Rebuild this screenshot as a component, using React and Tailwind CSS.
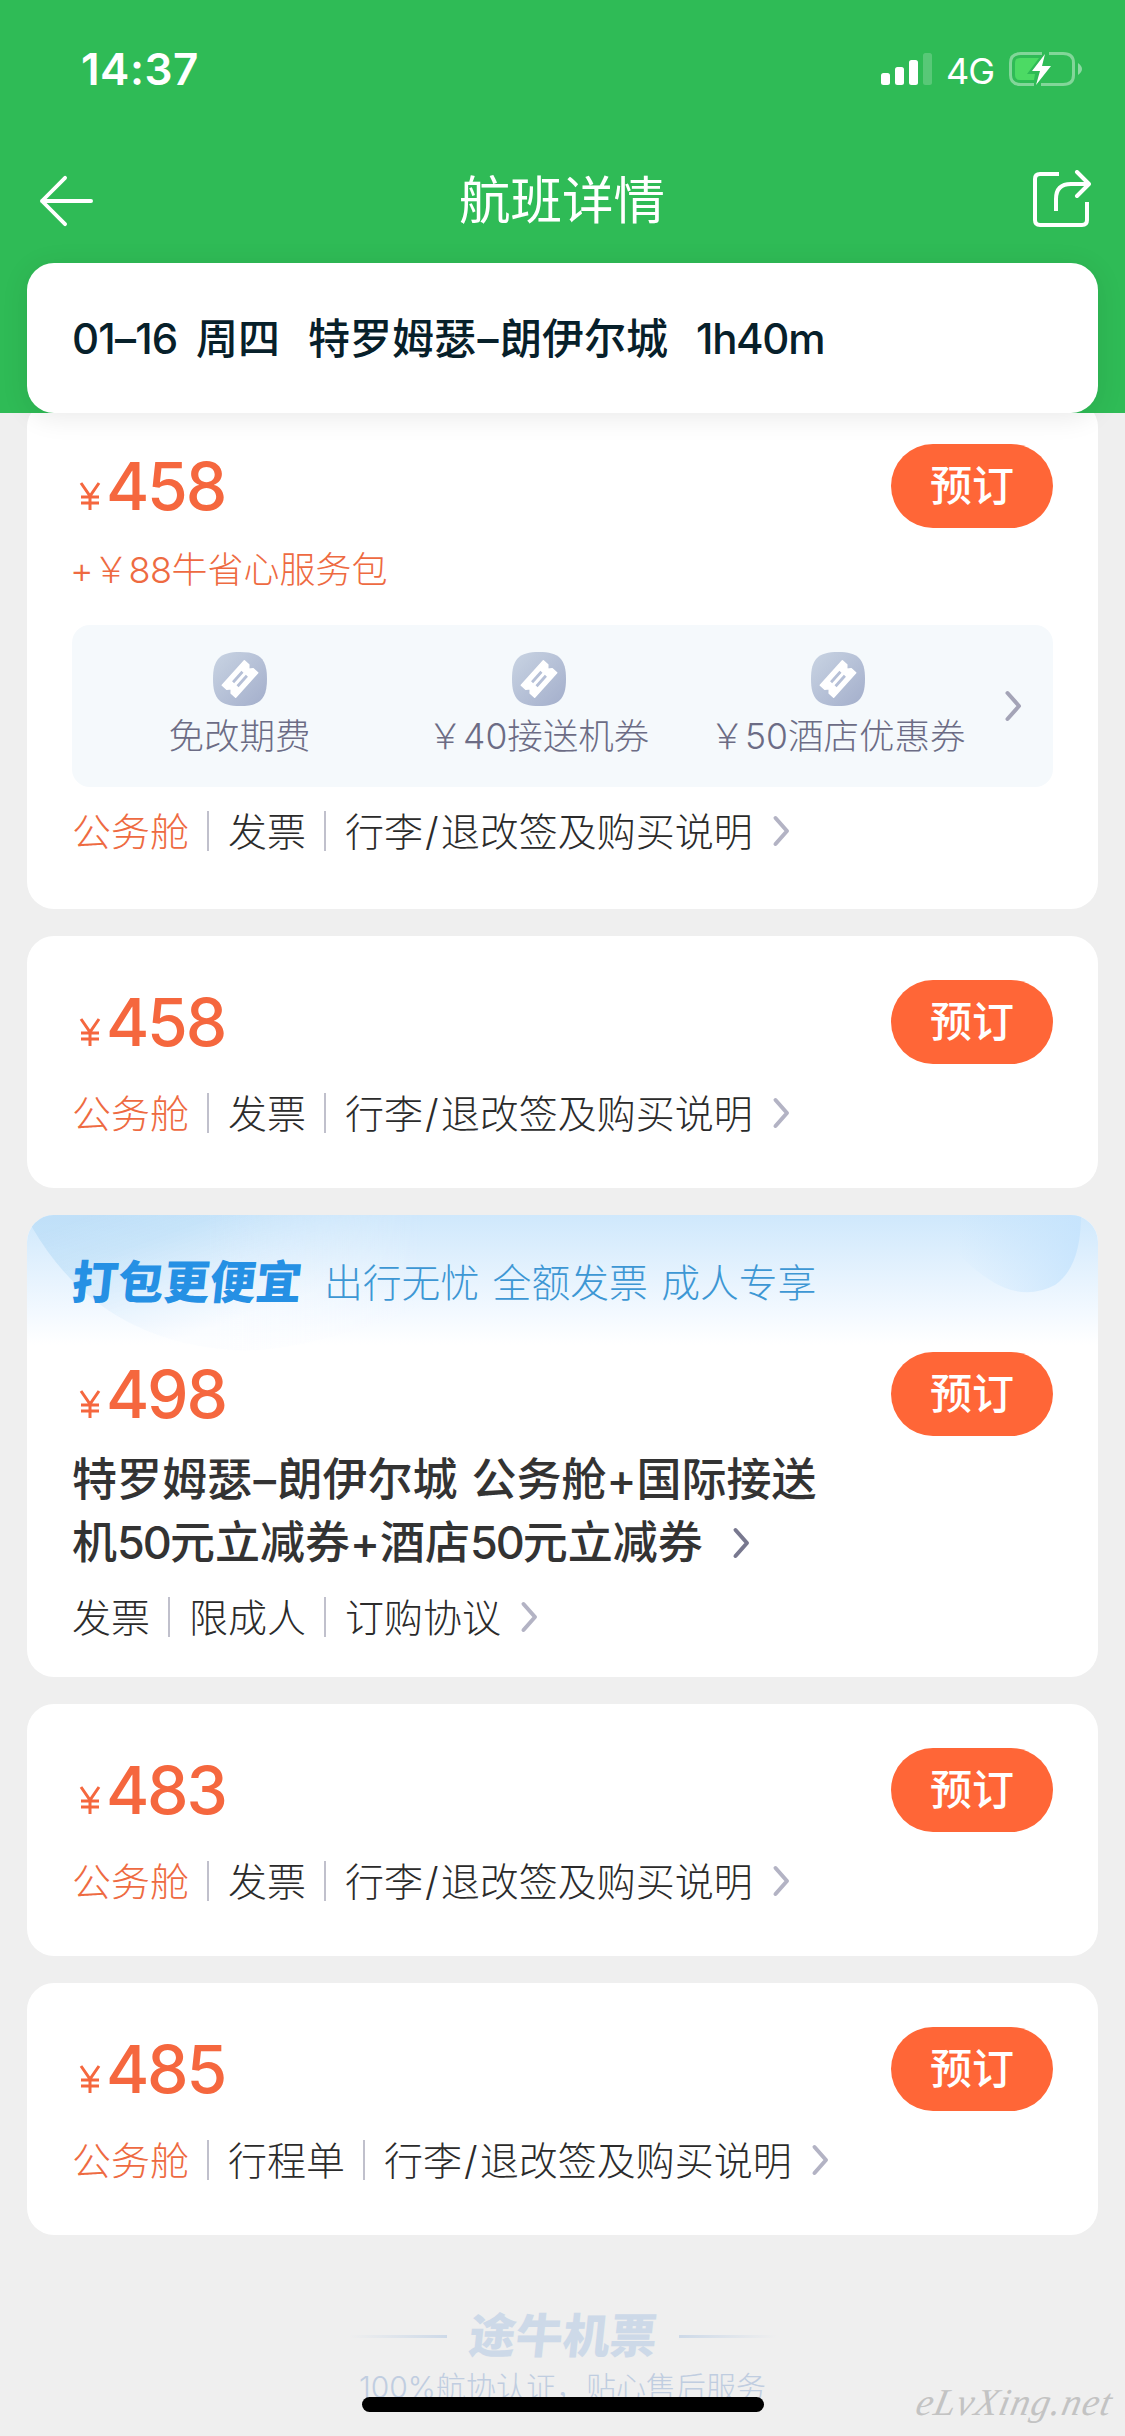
import React from "react";

const tickets = [
  { price: "483", tags: ["发票"] },
  { price: "485", tags: ["行程单"] },
];

const perks = ["免改期费", "￥40接送机券", "￥50酒店优惠券"];

function Chevron({ className }) {
  return (
    <svg viewBox="0 0 18 32" className={className} fill="none" stroke="currentColor" strokeWidth="4" strokeLinecap="round" strokeLinejoin="round">
      <path d="M3.5 3 L15 16 L3.5 29" />
    </svg>
  );
}

function StatusBar() {
  return (
    <div className="flex h-[138px] items-center justify-between pl-[81px] pr-[42px] text-white">
      <span className="text-[44px] font-semibold leading-none tracking-[0.5px]">14:37</span>
      <div className="flex items-center">
        <svg viewBox="0 0 52 33" className="h-[33px] w-[52px]" fill="currentColor">
          <rect x="0" y="20" width="9" height="12" rx="2.5" />
          <rect x="14" y="14" width="9" height="18" rx="2.5" />
          <rect x="28" y="7" width="9" height="25" rx="2.5" />
          <rect x="42" y="0" width="9" height="32" rx="2.5" opacity="0.2" />
        </svg>
        <span className="ml-[13px] mt-[3px] w-[50px] text-[36px] leading-none tracking-[-1px]">4G</span>
        <svg viewBox="0 0 74 36" className="ml-[13px] h-[36px] w-[74px]" fill="none">
          <path d="M33 2.5H12Q1.5 2.5 1.5 12V24Q1.5 33.5 12 33.5H25" stroke="#fff" strokeOpacity="0.4" strokeWidth="3" />
          <path d="M40 2.5H54Q64.5 2.5 64.5 12V24Q64.5 33.5 54 33.5H32" stroke="#fff" strokeOpacity="0.4" strokeWidth="3" />
          <path d="M69 12Q77 18 69 24Z" fill="#fff" fillOpacity="0.45" />
          <path d="M11 7H30L18 23H26L25 29H11Q6 29 6 24V12Q6 7 11 7Z" fill="#4cda64" />
          <path d="M36 3L23 20H31L27 34L42 15H33Z" fill="#fff" />
        </svg>
      </div>
    </div>
  );
}

function NavBar() {
  return (
    <div className="flex h-[125px] items-center justify-between pl-[38px] pr-[34px] text-white">
      <svg viewBox="0 0 56 54" className="h-[52px] w-[58px]" fill="none" stroke="currentColor" strokeWidth="4" strokeLinecap="round" strokeLinejoin="round">
        <path d="M26 3L2 27L26 51M2 27H53" />
      </svg>
      <h1 className="mr-[5px] text-[51.5px] font-normal leading-none">航班详情</h1>
      <svg viewBox="0 0 58 58" className="-mt-[4px] h-[58px] w-[58px]" fill="none" stroke="currentColor" strokeWidth="4" strokeLinejoin="round">
        <path d="M26 4H7Q2 4 2 9V50Q2 55 7 55H49Q54 55 54 50V32" />
        <path d="M23 41V29Q23 14 38 14H56" />
        <path d="M44 2L56 14L44 26" strokeLinecap="round" />
      </svg>
    </div>
  );
}

function PriceRow({ price }) {
  return (
    <div className="flex h-[84px] items-center justify-between">
      <div className="flex items-baseline pl-[7px] text-[#f5673e]">
        <svg viewBox="0 0 22 28" className="mr-[5px] h-[28px] w-[22px]" fill="none" stroke="currentColor" strokeWidth="3">
          <path d="M2 1L11 14L20 1M11 14V28M2 15H20M2 21H20" />
        </svg>
        <span className="text-[66px] font-medium leading-[82px] tracking-[-2.2px]">{price}</span>
      </div>
      <button className="h-[84px] w-[162px] rounded-full bg-[#ff6637] pb-[1px] text-[42px] font-medium leading-none text-white">预订</button>
    </div>
  );
}

function TagRow({ cabin, tags, link }) {
  const items = [...tags, link];
  return (
    <div className="flex h-[48px] items-center text-[39px] font-light leading-none text-[#2b2b2b]">
      {cabin && <span className="text-[#ee6a41]">{cabin}</span>}
      {items.map((item, i) => (
        <React.Fragment key={item}>
          {(cabin || i > 0) && <span className="ml-[18px] mr-[19px] h-[40px] w-[2px] bg-[#c0c0cc]" />}
          <span className="whitespace-nowrap">
            {item.split("/").map((part, n) => (
              <React.Fragment key={part}>
                {n > 0 && <span className="px-[2px]">/</span>}
                {part}
              </React.Fragment>
            ))}
          </span>
        </React.Fragment>
      ))}
      <Chevron className="ml-[19px] h-[32px] w-[18px] text-[#b3b3c4]" />
    </div>
  );
}

function TicketIcon() {
  return (
    <svg viewBox="0 0 54 54" className="h-[54px] w-[54px]">
      <defs>
        <linearGradient id="badge" x1="0" y1="0" x2="1" y2="1">
          <stop offset="0" stopColor="#c9d4e3" />
          <stop offset="1" stopColor="#a3aecb" />
        </linearGradient>
      </defs>
      <path d="M27 0C47 0 54 7 54 27S47 54 27 54S0 47 0 27S7 0 27 0Z" fill="url(#badge)" />
      <g transform="rotate(-48 27 27)">
        <path d="M10.5 18H43.5V24L40 27L43.5 30V36H10.5V30L14 27L10.5 24Z" fill="#fff" stroke="#fff" strokeWidth="1.5" strokeLinejoin="round" />
        <path d="M20 24H34M20 30H34" stroke="#b6c0d7" strokeWidth="2.8" />
      </g>
    </svg>
  );
}

function ServicePackage() {
  return (
    <>
      <p className="mt-[20px] flex h-[44px] items-center whitespace-nowrap text-[36px] font-light leading-none text-[#ee6a41]">
        <span className="-ml-[2px] tracking-[-0.5px]">+￥88</span>牛省心服务包
      </p>
      <div className="relative mt-[33px] flex h-[162px] rounded-[18px] bg-[#f5f9fc] pl-[18px] pr-[63px]">
        {perks.map((perk) => (
          <div key={perk} className="flex w-[299px] shrink-0 flex-col items-center pt-[27px]">
            <TicketIcon />
            <span className="mt-[11px] whitespace-nowrap text-[35.5px] font-light leading-[40px] text-[#6c6c85]">{perk}</span>
          </div>
        ))}
        <Chevron className="absolute right-[31px] top-[65px] h-[32px] w-[18px] text-[#a4a4b7]" />
      </div>
    </>
  );
}

function Card({ price, tags }) {
  return (
    <section className="h-[252px] rounded-[27px] bg-white px-[45px] pt-[44px]">
      <PriceRow price={price} />
      <div className="mt-[25px]">
        <TagRow cabin="公务舱" tags={tags} link="行李/退改签及购买说明" />
      </div>
    </section>
  );
}

function BundleCard() {
  return (
    <section className="relative h-[462px] overflow-hidden rounded-[27px] bg-white px-[45px]">
      <svg viewBox="0 0 1071 140" className="absolute left-0 top-0 h-[140px] w-full" preserveAspectRatio="none">
        <defs>
          <linearGradient id="sky" x1="0" y1="0" x2="0" y2="1">
            <stop offset="0" stopColor="#cfe8fc" />
            <stop offset="0.75" stopColor="#f3f9ff" />
            <stop offset="1" stopColor="#ffffff" />
          </linearGradient>
          <linearGradient id="arc" gradientUnits="userSpaceOnUse" x1="60" y1="0" x2="110" y2="140">
            <stop offset="0" stopColor="#b9dcf6" stopOpacity="0.7" />
            <stop offset="0.3" stopColor="#bfe0f8" stopOpacity="0.65" />
            <stop offset="0.7" stopColor="#e3f1fd" stopOpacity="0.6" />
            <stop offset="1" stopColor="#fafcff" stopOpacity="0.6" />
          </linearGradient>
          <linearGradient id="arcFade" x1="0" y1="0" x2="1" y2="0">
            <stop offset="0.45" stopColor="#fff" />
            <stop offset="1" stopColor="#000" />
          </linearGradient>
          <mask id="arcMask">
            <rect width="400" height="140" fill="url(#arcFade)" />
          </mask>
          <linearGradient id="drop" x1="0.2" y1="0.5" x2="1" y2="0.5">
            <stop offset="0" stopColor="#c4e3fd" stopOpacity="0" />
            <stop offset="1" stopColor="#c4e3fd" stopOpacity="0.8" />
          </linearGradient>
        </defs>
        <rect width="1071" height="130" fill="url(#sky)" />
        <path d="M0 0H400V90Q270 140 205 135Q70 125 5 12L0 0Z" fill="url(#arc)" mask="url(#arcMask)" />
        <path d="M900 0H1054Q1054 52 1028 70Q998 86 966 67Q930 45 900 0Z" fill="url(#drop)" />
      </svg>
      <div className="relative">
        <div className="flex h-[137px] items-center whitespace-nowrap leading-none">
          <span className="-mt-[4px] -skew-x-6 text-[46px] font-black text-[#2590e4]">打包更便宜</span>
          <span className="ml-[22px] text-[38.8px] font-light text-[#3d97d4] [word-spacing:2.5px]">出行无忧 全额发票 成人专享</span>
        </div>
        <PriceRow price="498" />
        <h2 className="mt-[12px] text-[45px] font-medium leading-[63px] text-[#333333]">
          特罗姆瑟<span className="px-[1.5px]">–</span>朗伊尔城 <span className="ml-[2px]">公务舱+国际接送</span>
          <br />
          <span className="flex items-center">
            机<span className="tracking-[-2px]">50</span>元立减券+酒店<span className="tracking-[-2px]">50</span>元立减券
            <Chevron className="ml-[29px] h-[32px] w-[18px] text-[#78788f]" />
          </span>
        </h2>
        <div className="mt-[19px]">
          <TagRow tags={["发票", "限成人"]} link="订购协议" />
        </div>
      </div>
    </section>
  );
}

function Footer() {
  return (
    <footer className="relative h-[201px] overflow-hidden pt-[76px]">
      <div className="flex items-center justify-center text-[#cdd9e8]">
        <span className="h-[3px] w-[98px] bg-linear-to-r from-transparent to-[#cdd9e8]" />
        <span className="mx-[22px] -skew-x-6 text-[47px] font-black leading-[50px]">途牛机票</span>
        <span className="h-[3px] w-[98px] bg-linear-to-l from-transparent to-[#cdd9e8]" />
      </div>
      <p className="mt-[6px] text-center text-[30px] font-light leading-[40px] text-[#c0cde0]">100%航协认证，贴心售后服务</p>
      <div className="absolute left-[362px] top-[162px] h-[15px] w-[402px] rounded-full bg-black" />
      <span className="absolute right-[12px] top-[145px] -skew-x-12 font-['Liberation_Serif',serif] text-[38px] font-medium italic leading-[44px] tracking-[1.2px] text-[#c3c3c3]">eLvXing.net</span>
    </footer>
  );
}

export default function App() {
  return (
    <div className="h-[2436px] w-[1125px] overflow-hidden bg-[#efefef] font-['Inter','Noto_Sans_CJK_SC',sans-serif]">
      <header className="relative z-10 h-[413px] bg-[#2fbb56]">
        <StatusBar />
        <NavBar />
        <div className="mx-[27px] flex h-[150px] items-center whitespace-pre rounded-[27px] bg-white pl-[45px] pt-[2px] text-[42px] font-medium leading-none text-[#07202a] shadow-[0_4px_28px_rgba(0,0,0,0.09)]">
          <span className="w-[124px] tracking-[-0.8px]">01–16</span>
          <span className="w-[112px]">周四</span>
          <span className="w-[388px]">特罗姆瑟<span className="px-[1.5px]">–</span>朗伊尔城</span>
          <span className="tracking-[-1.3px]">1h40m</span>
        </div>
      </header>
      <main className="flex flex-col gap-[27px] px-[27px]">
        <section className="-mt-[13px] h-[509px] rounded-[27px] bg-white px-[45px] pt-[44px]">
          <PriceRow price="458" />
          <ServicePackage />
          <div className="mt-[20px]">
            <TagRow cabin="公务舱" tags={["发票"]} link="行李/退改签及购买说明" />
          </div>
        </section>
        <Card price="458" tags={["发票"]} />
        <BundleCard />
        {tickets.map((ticket) => (
          <Card key={ticket.price} {...ticket} />
        ))}
      </main>
      <Footer />
    </div>
  );
}
